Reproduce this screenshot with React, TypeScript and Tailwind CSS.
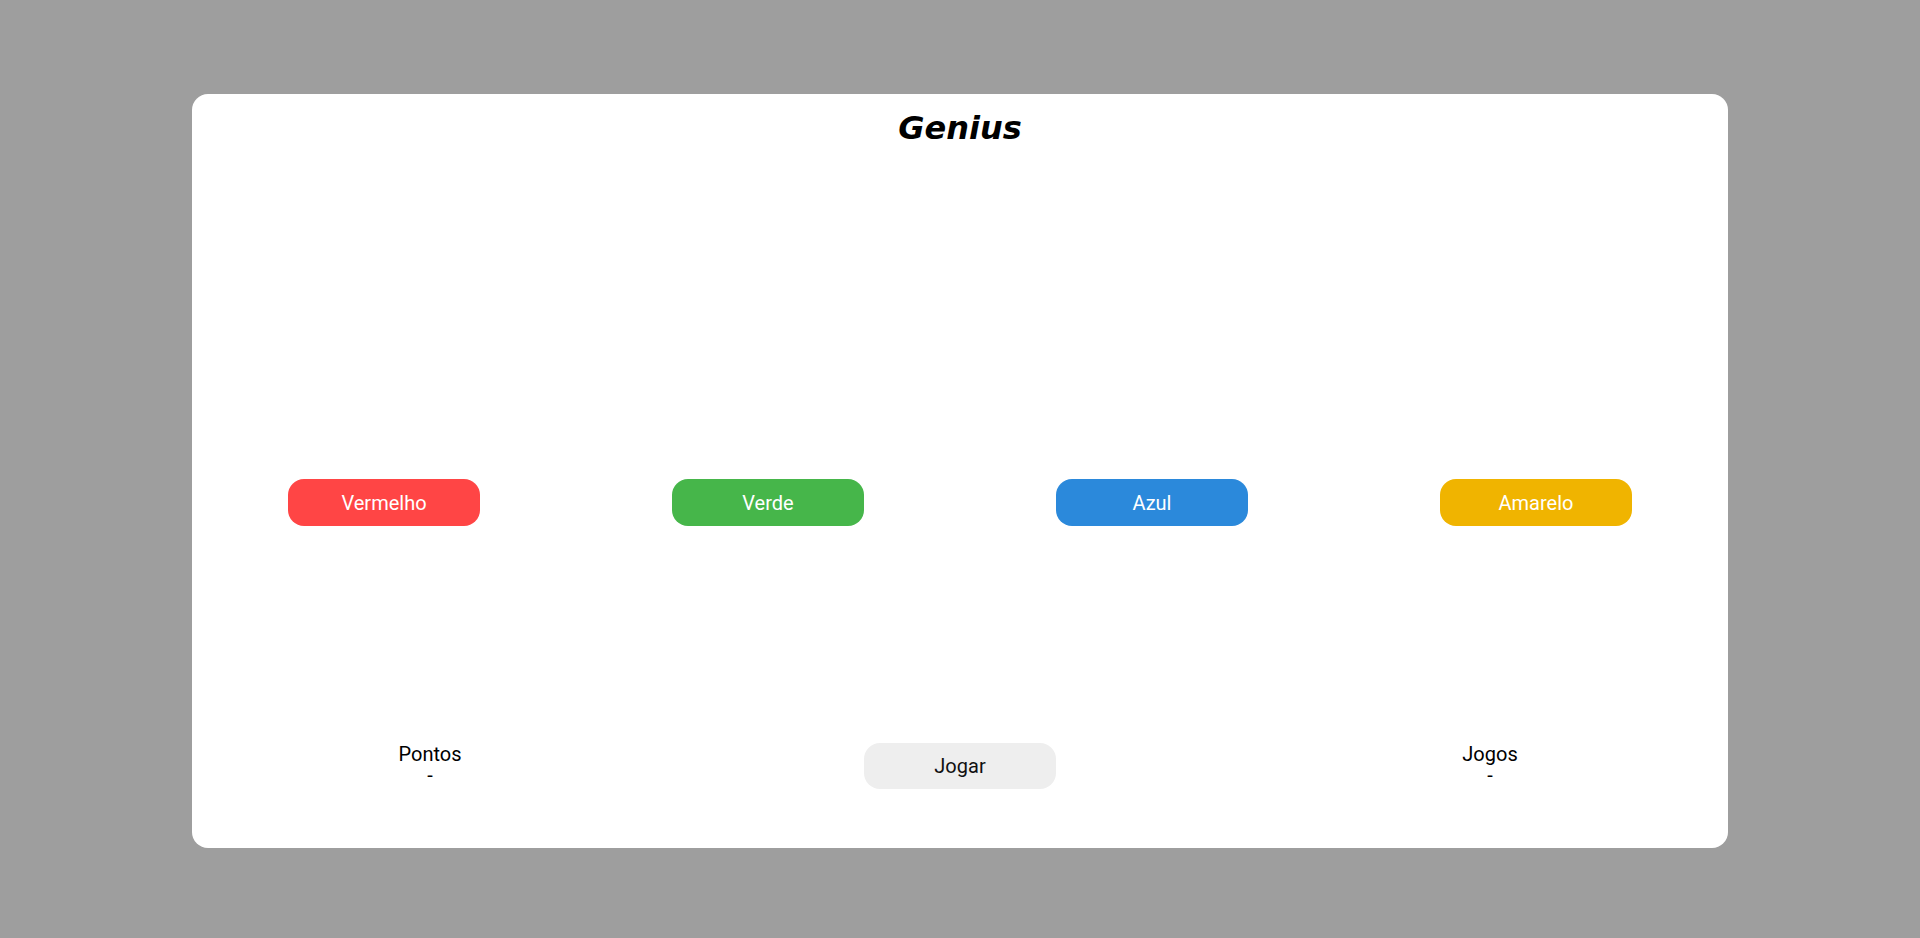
const colors = [
  { label: "Vermelho", cls: "bg-[#ff4545]" },
  { label: "Verde", cls: "bg-[#46b64a]" },
  { label: "Azul", cls: "bg-[#2b89db]" },
  { label: "Amarelo", cls: "bg-[#f0b400]" },
];

function Stat({ label, value }: { label: string; value: string }) {
  return (
    <div className="mb-[3px] flex w-[84px] flex-col items-center text-[20px] leading-[21px] text-black">
      <span>{label}</span>
      <span>{value}</span>
    </div>
  );
}

export default function App() {
  return (
    <div className="min-h-screen w-full bg-[#9e9e9e] pt-[94px] font-['Roboto',sans-serif]">
      <div className="mx-auto flex h-[754px] w-[1536px] flex-col rounded-2xl bg-white pt-[16px]">
        <h1 className="text-center font-['DejaVu_Sans',Verdana,sans-serif] text-[32px] leading-[37px] font-bold italic text-black">
          Genius
        </h1>

        <div className="mt-[332px] grid grid-cols-4">
          {colors.map((c) => (
            <div key={c.label} className="flex justify-center">
              <button
                className={`h-[47px] w-[192px] rounded-2xl text-[20px] text-white ${c.cls}`}
              >
                {c.label}
              </button>
            </div>
          ))}
        </div>

        <div className="mt-[217px] flex items-center justify-around">
          <Stat label="Pontos" value="-" />
          <button className="h-[46px] w-[192px] rounded-2xl bg-[#eeeeee] text-[20px] text-[#111]">
            Jogar
          </button>
          <Stat label="Jogos" value="-" />
        </div>
      </div>
    </div>
  );
}
